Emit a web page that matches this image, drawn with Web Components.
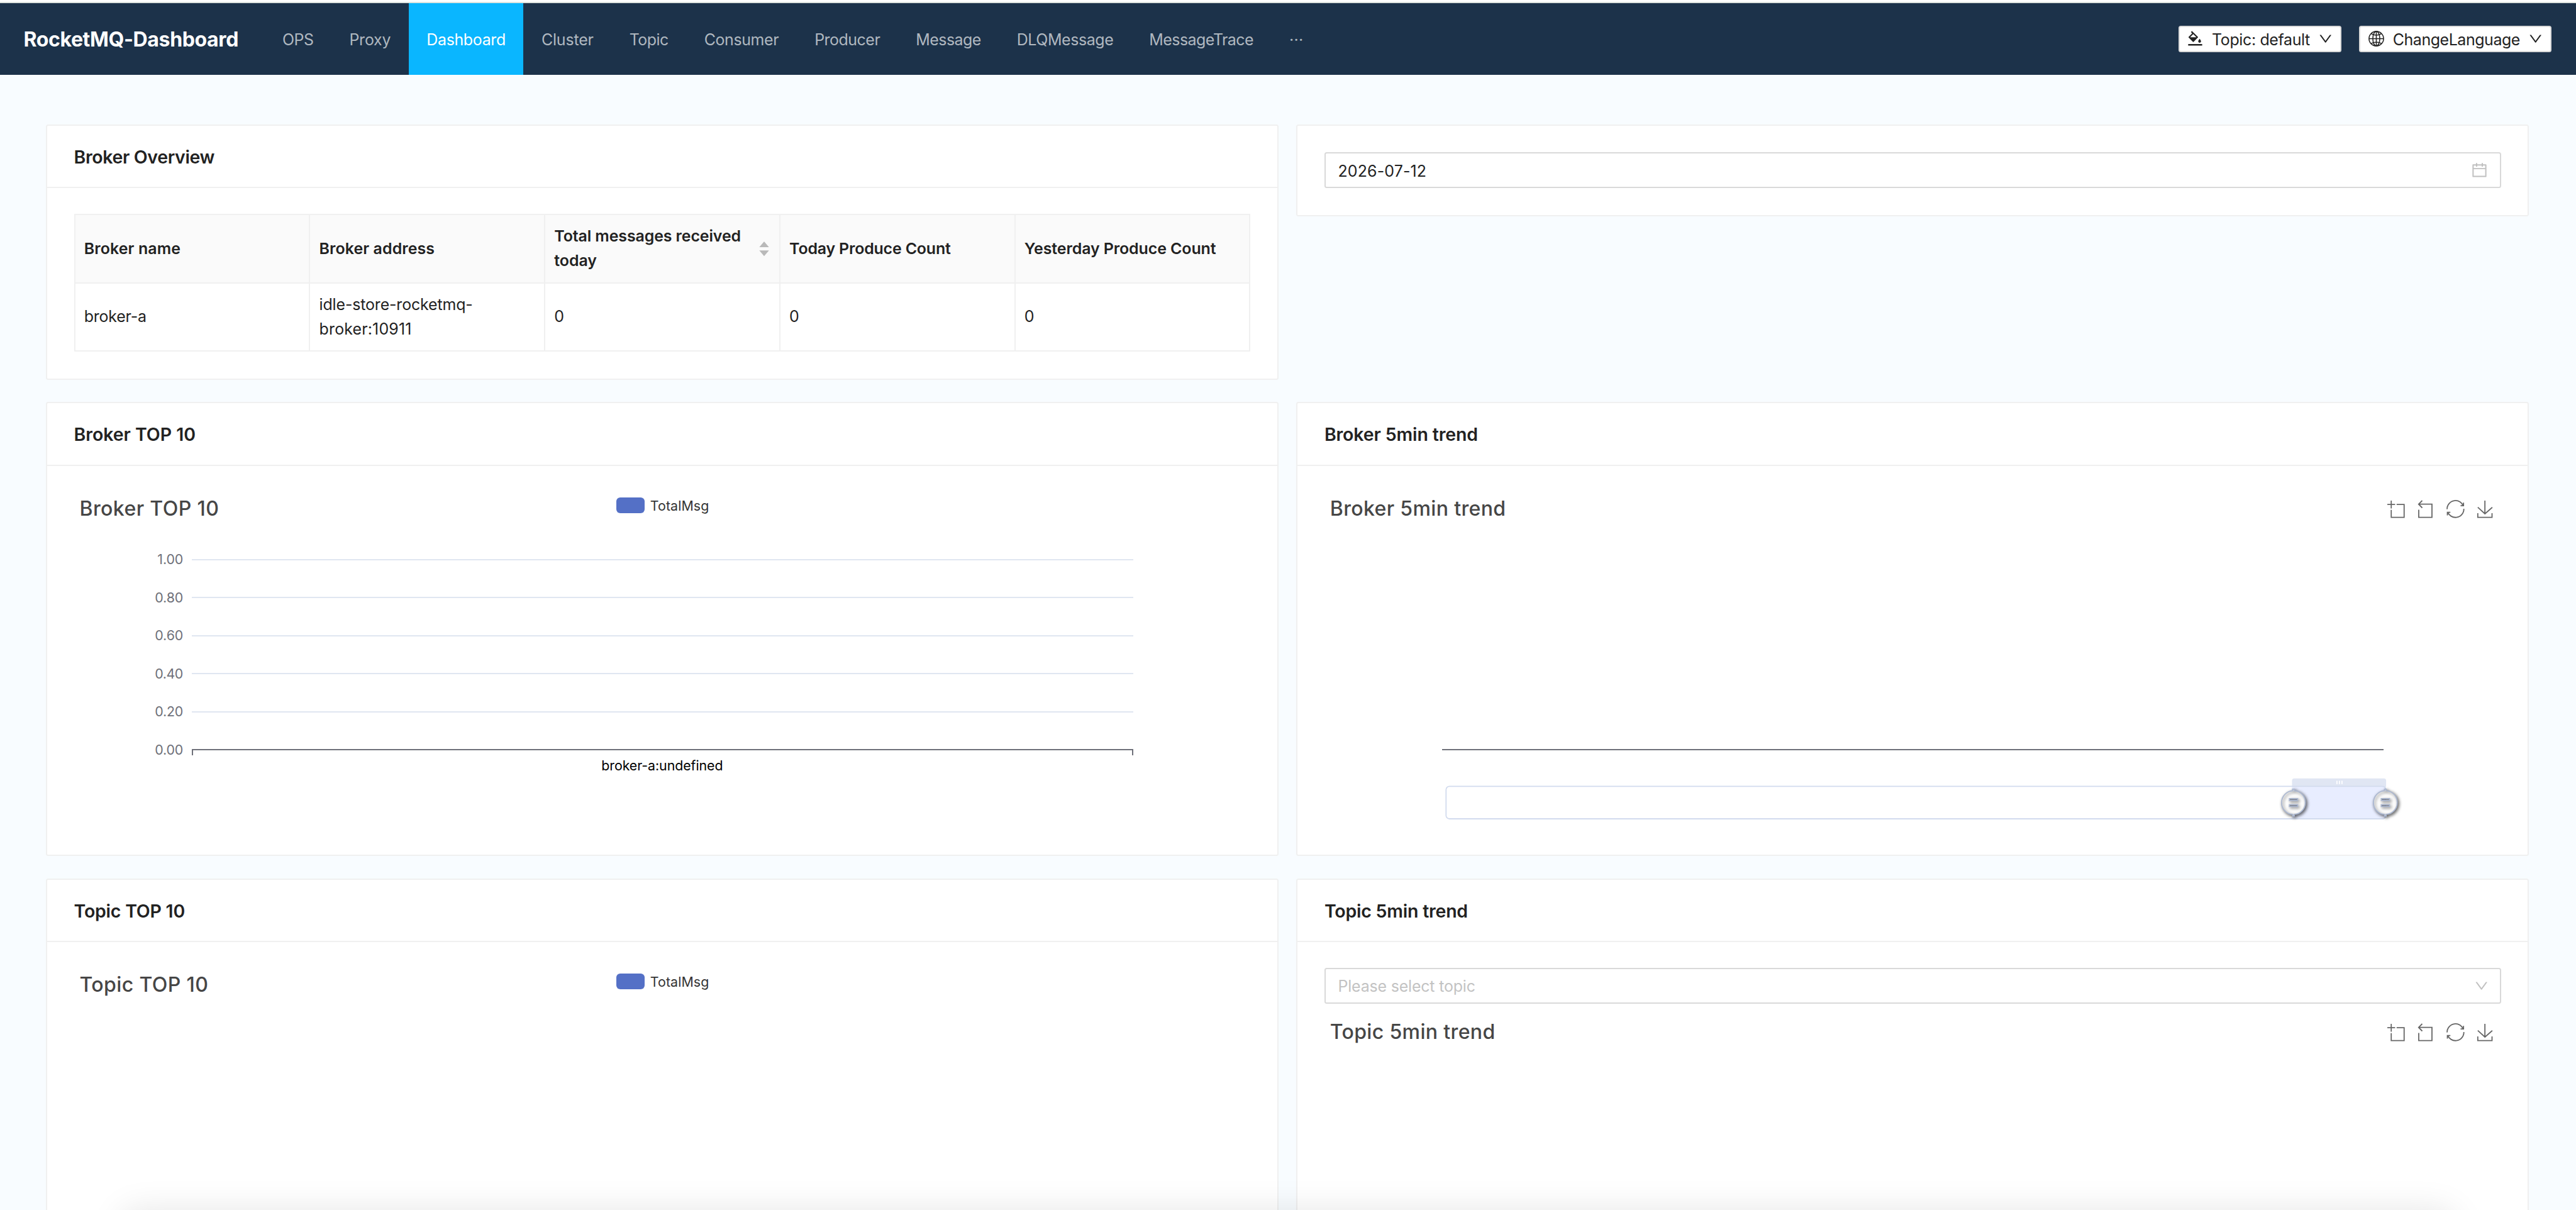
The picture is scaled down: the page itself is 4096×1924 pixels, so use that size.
<!DOCTYPE html>
<html lang="en">
<head>
<meta charset="utf-8">
<title>RocketMQ-Dashboard</title>
<style>
  /* 1rem is one hundred design units */
  html { font-size: 89.082px; }
  body { margin: 0; background: #f8fcff; color: #222; font-family: Inter, "Liberation Sans", sans-serif; height: 100vh; overflow: hidden; }
</style>
</head>
<body>
<rmq-app></rmq-app>
<script>
const U = 89.082 / 100;
const base = '*{box-sizing:border-box}';
const define = (name, css, html, init) => customElements.define(name, class extends HTMLElement {
  constructor() {
    super();
    this.attachShadow({ mode: 'open' });
  }
  connectedCallback() {
    if (this.shadowRoot.firstChild) return;
    const t = document.createElement('template');
    t.innerHTML = `<style>${base}${css}</style>` + (typeof html === 'function' ? html(this) : html);
    this.shadowRoot.append(t.content.cloneNode(true));
    if (init) init(this);
  }
});

/* Text tracked to an advance width, given in design units */
define('ui-text', `:host{display:inline-block;white-space:nowrap} span{display:inline-block}`,
  '<span><slot></slot></span>', el => {
    const w = parseFloat(el.getAttribute('w')) * U;
    const span = el.shadowRoot.querySelector('span');
    const natural = span.getBoundingClientRect().width;
    const n = el.textContent.length;
    if (w && natural) span.style.letterSpacing = ((w - natural) / n).toFixed(4) + 'px';
  });

const ICONS = {
  bg: ['64 64 896 896', '<path d="M766.4 744.3c43.7 0 79.4-36.2 79.4-80.5 0-53.5-79.4-140.8-79.4-140.8S687 610.3 687 663.8c0 44.3 35.7 80.5 79.4 80.5zm-377.1-44.1c7.1 7.1 18.6 7.1 25.6 0l256.1-256c7.1-7.1 7.1-18.6 0-25.6l-256-256c-.6-.6-1.3-1.2-2-1.7l-78.2-78.2a9.11 9.11 0 00-12.8 0l-48 48a9.11 9.11 0 000 12.8l67.2 67.2-207.8 207.9c-7.1 7.1-7.1 18.6 0 25.6l255.9 256zm12.9-448.6l178.9 178.9H223.4l178.8-178.9zM904 816H120c-4.4 0-8 3.6-8 8v80c0 4.4 3.6 8 8 8h784c4.4 0 8-3.6 8-8v-80c0-4.4-3.6-8-8-8z"/>'],
  globe: ['0 0 28 28', '<g fill="none" stroke="currentColor" stroke-width="1.75"><circle cx="14" cy="14" r="13"/><ellipse cx="14" cy="14" rx="6.2" ry="13"/><path d="M14 1v26M1 14h26M4.6 5c5 3.8 13.8 3.8 18.8 0M4.6 23c5-3.8 13.8-3.8 18.8 0"/></g>'],
  down: ['64 64 896 896', '<path d="M884 256h-75c-5.1 0-9.9 2.5-12.9 6.6L512 654.2 227.9 262.6c-3-4.1-7.8-6.6-12.9-6.6h-75c-6.5 0-10.3 7.4-6.5 12.7l352.6 486.1c12.8 17.6 39 17.6 51.7 0l352.6-486.1c3.9-5.3.1-12.7-6.4-12.7z"/>'],
  calendar: ['64 64 896 896', '<path d="M880 184H712v-64c0-4.4-3.6-8-8-8h-56c-4.4 0-8 3.6-8 8v64H384v-64c0-4.4-3.6-8-8-8h-56c-4.4 0-8 3.6-8 8v64H144c-17.7 0-32 14.3-32 32v664c0 17.7 14.3 32 32 32h736c17.7 0 32-14.3 32-32V216c0-17.7-14.3-32-32-32zm-40 656H184V460h656v380zM184 392V256h128v48c0 4.4 3.6 8 8 8h56c4.4 0 8-3.6 8-8v-48h256v48c0 4.4 3.6 8 8 8h56c4.4 0 8-3.6 8-8v-48h128v136H184z"/>'],
  sorter: ['0 0 18 26', '<path d="M9 0l8.6 10H.4zM9 26l8.6-10H.4z"/>']
};
define('ui-icon', ':host{display:block;flex:none} svg{display:block;width:100%;height:100%;overflow:visible}',
  el => { const [vb, p] = ICONS[el.getAttribute('name')]; return `<svg viewBox="${vb}" fill="currentColor">${p}</svg>`; });

define('top-button', `
  :host{display:flex;align-items:center;height:.48rem;padding:0 calc(.16rem - 2px);border:2px solid #d9d9d9;border-radius:.04rem;background:#fff;color:#222;font-size:.28rem;gap:.16rem}
  ::slotted(*){padding-top:.02rem}
  .i{width:.28rem;height:.28rem} .d{width:.24rem;height:.24rem}`,
  el => `<ui-icon class="i" name="${el.getAttribute('icon')}"></ui-icon><slot></slot><ui-icon class="d" name="down"></ui-icon>`);

define('nav-item', `
  :host{display:flex;align-items:center;padding:.02rem .32rem 0;color:rgba(255,255,255,.66);font-size:.28rem}
  :host([active]){background:#0ab6ff;color:#fff}`, '<slot></slot>');

define('top-bar', `
  :host{display:block;border-top:.04rem solid #fff}
  header{height:1.3rem;border-top:2px solid #dfe5e1;background:#1c324a;display:flex;justify-content:space-between;align-items:stretch;padding:0 .44rem 0 .42rem}
  .l,.r{display:flex} .r{align-items:center;gap:.32rem} nav{display:flex}
  .logo{align-self:center;width:4.3rem;padding-top:.02rem;font-size:.36rem;font-weight:700;color:#fff}`,
  `<header><div class="l"><div class="logo"><ui-text w="383.5">RocketMQ-Dashboard</ui-text></div><nav>
  ${[['OPS', 55.5], ['Proxy', 74], ['Dashboard', 141], ['Cluster', 93], ['Topic', 69.5], ['Consumer', 133], ['Producer', 117], ['Message', 116], ['DLQMessage', 172.5], ['MessageTrace', 186], ['···', 25]]
    .map(([t, w]) => `<nav-item${t === 'Dashboard' ? ' active' : ''}><ui-text w="${w}">${t}</ui-text></nav-item>`).join('')}
  </nav></div><div class="r"><top-button icon="bg"><ui-text w="175">Topic: default</ui-text></top-button><top-button icon="globe"><ui-text w="227">ChangeLanguage</ui-text></top-button></div></header>`);

define('ui-card', `
  :host{display:block;width:22rem;flex:none;background:#fff;border:2px solid #f0f0f0;border-radius:.04rem;align-self:flex-start}
  .h{height:1.1175rem;margin-bottom:-2px;display:flex;align-items:center;padding:.015rem calc(.5rem - 2px) 0;border-bottom:2px solid #f0f0f0;font-size:.32rem;font-weight:600;color:#222}
  .b{padding:.48rem calc(.5rem - 2px)}`,
  el => (el.querySelector('[slot=title]') ? '<div class="h"><slot name="title"></slot></div>' : '') + '<div class="b"><slot></slot></div>');

define('ui-field', `
  :host{display:flex;align-items:center;justify-content:space-between;height:.64rem;border:2px solid #d9d9d9;border-radius:.04rem;background:#fff;font-size:.28rem;padding:0 .22rem 0 .22rem}
  :host([placeholder]){color:#c3c3c3;padding-right:.2rem}
  ::slotted(*){padding-top:.015rem}
  ui-icon{color:#c0c0c0;width:.28rem;height:.28rem} ui-icon[name=down]{width:.24rem;height:.24rem}`,
  el => `<slot></slot><ui-icon name="${el.getAttribute('icon')}"></ui-icon>`);

define('broker-table', `
  :host{display:block}
  .t{border:2px solid #f0f0f0;border-right:0;border-bottom:0;font-size:.28rem;line-height:.44rem}
  .row{display:grid;grid-template-columns:repeat(5,1fr);height:1.22rem}
  .row>div{display:flex;align-items:center;justify-content:space-between;border-right:2px solid #f0f0f0;border-bottom:2px solid #f0f0f0;padding:0 .16rem}
  .head{background:#fafafa;font-weight:600} ui-text{display:block}
  ui-icon{width:.18rem;height:.26rem;color:#b9b9b9;margin-right:.02rem}`,
  `<div class="t"><div class="row head"><div><ui-text w="172">Broker name</ui-text></div><div><ui-text w="206">Broker address</ui-text></div>
  <div><span><ui-text w="333">Total messages received</ui-text><ui-text w="76">today</ui-text></span><ui-icon name="sorter"></ui-icon></div>
  <div><ui-text w="288">Today Produce Count</ui-text></div><div><ui-text w="342">Yesterday Produce Count</ui-text></div></div>
  <div class="row"><div><ui-text w="111">broker-a</ui-text></div><div><span><ui-text w="274">idle-store-rocketmq-</ui-text><ui-text w="165">broker:10911</ui-text></span></div>
  <div>0</div><div>0</div><div>0</div></div></div>`);

/* Toolbox: area zoom, zoom back, restore, save */
const TOOLS = [
  ['0 0 58 58', 'M0,13.5h26.9 M13.5,26.9V0 M32.1,13.5H58V58H13.5 V32.1'],
  ['9.9 1.4 45 56.7', 'M22,1.4L9.9,13.5l12.3,12.3 M10.3,13.5H54.9v44.6 H10.3v-26'],
  ['2.1 2 55.8 56', 'M47,18.9h9.8V8.7 M56.3,20.1 C52.1,9,40.5,0.6,26.8,2.1C12.6,3.7,1.6,16.2,2.1,30.6 M13,41.1H3.1v10.2 M3.7,39.9c4.2,11.1,15.8,19.5,29.5,18 c14.2-1.6,25.2-14.1,24.7-28.5'],
  ['4.6 0 50.1 58', 'M4.7,22.9L29.3,45.5L54.7,23.4M4.6,43.6L4.6,58L53.8,58L53.8,43.6M29.2,45.1L29.2,0']
];
define('chart-head', `
  :host{display:flex;justify-content:space-between;height:.62rem;padding:.1rem .135rem 0 .1rem}
  .t{font-size:.36rem;font-weight:500;line-height:.36rem;color:#464646;padding-top:.025rem;white-space:nowrap}
  .tools{display:flex;gap:.23rem;padding-top:.055rem}
  svg{width:.3rem;height:.3rem;overflow:visible;fill:none;stroke:#666;stroke-width:1.8px} path{vector-effect:non-scaling-stroke}`,
  el => `<div class="t"><slot></slot></div>` + (el.hasAttribute('tools') ? `<div class="tools">${TOOLS.map(([v, d]) => `<svg viewBox="${v}"><path d="${d}"/></svg>`).join('')}</div>` : ''));

define('chart-legend', `
  :host{display:flex;justify-content:center;align-items:center;gap:.1rem;height:.28rem;margin-top:-.52rem;margin-bottom:.24rem;font-size:.24rem;color:#333;padding-left:.02rem}
  i{width:.5rem;height:.28rem;border-radius:.07rem;background:#5470c6} ui-text{width:1.05rem;padding-top:.01rem}`,
  '<i></i><ui-text w="105">TotalMsg</ui-text>');

define('bar-plot', `
  :host{display:block;height:5.38rem} svg{display:block;width:21rem;height:5.38rem} text{font-family:inherit;font-size:24px} path{shape-rendering:crispEdges}`,
  () => {
    let s = '';
    ['1.00', '0.80', '0.60', '0.40', '0.20', '0.00'].forEach((t, i) => {
      const y = 59 + 68 * i;
      s += `<text x="194.5" y="${y + 8.5}" text-anchor="end" fill="#6e7079" textLength="${i ? 50.5 : 46}">${t}</text>`;
      if (i < 5) s += `<path d="M210 ${y}H1890" stroke="#e0e6f1" stroke-width="2.2"/>`;
    });
    return `<svg viewBox="0 0 2100 538">${s}<path d="M211 409V399H1889V409" stroke="#6e7079" stroke-width="2.2" fill="none"/>
    <text x="941" y="435.5" textLength="217" fill="#000">broker-a:undefined</text></svg>`;
  });

const HANDLE = 'M10.7,11.9v-1.3H9.3v1.3c-4.9,0.3-8.8,4.4-8.8,9.4c0,5,3.9,9.1,8.8,9.4v1.3h1.3v-1.3c4.9-0.3,8.8-4.4,8.8-9.4C19.5,16.3,15.6,12.2,10.7,11.9z M13.3,24.4H6.7V23h6.6V24.4z M13.3,19.6H6.7v-1.4h6.6V19.6z';
define('trend-plot', `
  :host{display:block;height:5.38rem} svg{display:block;width:21rem;height:5.38rem}
  .axis{shape-rendering:crispEdges}
  .k path{filter:drop-shadow(1.8px 1.8px 1.25px rgba(0,0,0,.6))}`,
  () => {
    const knob = x => `<g class="k" transform="translate(${x} 493) scale(2.243) translate(-10 -21.3)"><path d="${HANDLE}" fill="#fff"/><path d="${HANDLE}" fill="none" stroke="#acb8d1" stroke-width=".9"/></g>`;
    return `<svg viewBox="0 0 2100 538"><path class="axis" d="M210 399H1890" stroke="#6e7079" stroke-width="2.2"/>
    <rect x="217" y="464" width="1677" height="58" rx="6" fill="#fff" stroke="#d2dbee" stroke-width="2"/>
    <path d="M1727 465V454q0-4 4-4H1891q4 0 4 4V465z" fill="#e0e6f3"/>
    <path d="M1727 465H1894V521H1727z" fill="#e8edff"/>
    <path d="M1727 464H1888q6 0 6 6V516q0 6-6 6H1727" fill="none" stroke="#d2dbee" stroke-width="2"/>
    <path d="M1807.2 454v6M1811.7 454v6M1816.2 454v6" stroke="#fff" stroke-width="2"/>${knob(1729.7)}${knob(1893.7)}</svg>`;
  });

define('rmq-app', `
  :host{display:block;height:100vh;overflow:hidden;position:relative}
  main{padding:.885rem .84rem 0 .82rem;display:flex;flex-direction:column;gap:.4rem}
  section{display:flex;gap:.32rem}
  .first{height:4.56rem} .second>ui-card{height:8.1rem} .third>ui-card{height:8.5rem}
  .third chart-head.low{margin-top:.2rem}
  .dock{position:absolute;left:2.15rem;right:2.15rem;top:100%;height:1rem;border-radius:.3rem;box-shadow:0 0 .6rem rgba(0,0,0,.1)}`,
  `<top-bar></top-bar><main>
  <section class="first"><ui-card><ui-text slot="title" w="251">Broker Overview</ui-text><broker-table></broker-table></ui-card>
    <ui-card><ui-field icon="calendar"><ui-text w="158">2026-07-12</ui-text></ui-field></ui-card></section>
  <section class="second"><ui-card><ui-text slot="title" w="217">Broker TOP 10</ui-text><chart-head><ui-text w="249">Broker TOP 10</ui-text></chart-head><chart-legend></chart-legend><bar-plot></bar-plot></ui-card>
    <ui-card><ui-text slot="title" w="274">Broker 5min trend</ui-text><chart-head tools><ui-text w="314">Broker 5min trend</ui-text></chart-head><trend-plot></trend-plot></ui-card></section>
  <section class="third"><ui-card><ui-text slot="title" w="198">Topic TOP 10</ui-text><chart-head><ui-text w="230">Topic TOP 10</ui-text></chart-head><chart-legend></chart-legend></ui-card>
    <ui-card><ui-text slot="title" w="256">Topic 5min trend</ui-text><ui-field placeholder icon="down"><ui-text w="245">Please select topic</ui-text></ui-field><chart-head class="low" tools><ui-text w="295">Topic 5min trend</ui-text></chart-head></ui-card></section>
  </main><div class="dock"></div>`);
</script>
</body>
</html>
